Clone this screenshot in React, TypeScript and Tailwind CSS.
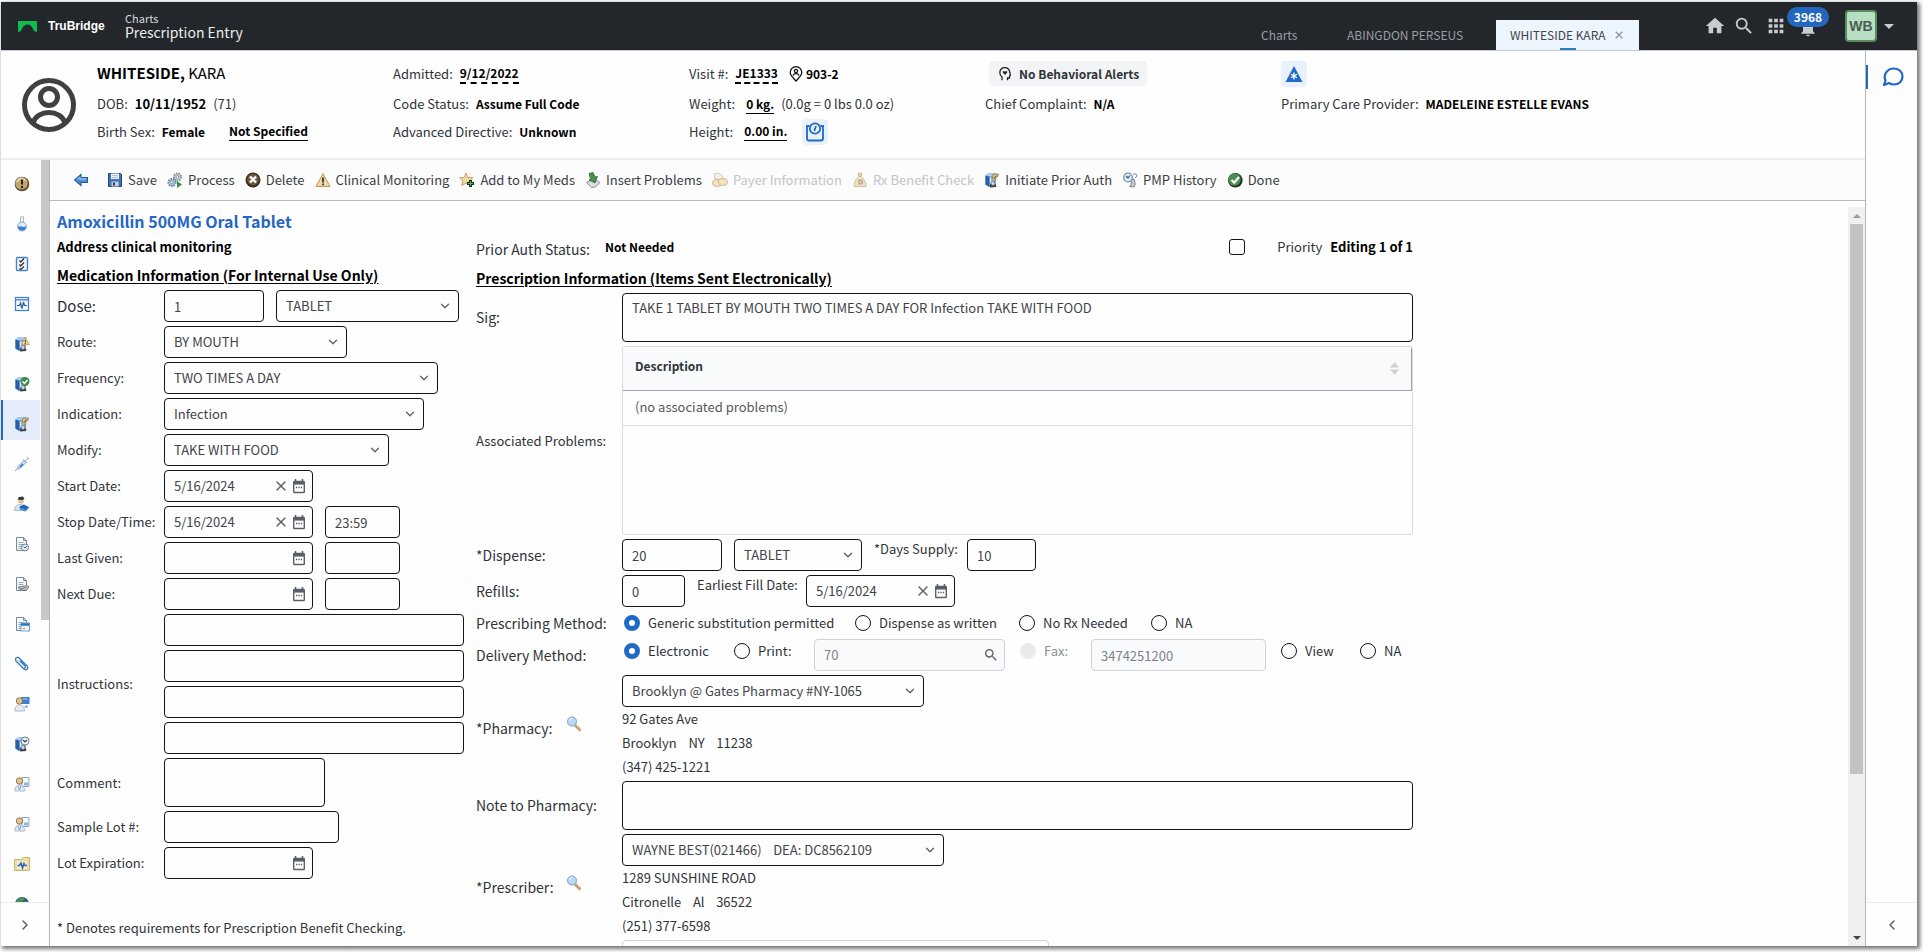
import type { ReactNode } from "react";
import { ChevronDown, ChevronLeft, ChevronRight, X } from "lucide-react";
import { MdHome, MdSearch, MdApps, MdNotifications, MdArrowDropDown } from "react-icons/md";

const inputStyle = "h-8 rounded-[4px] border border-[#111418] bg-transparent px-[9px] text-[13px] text-[#3f4449]";
const areaStyle = "block h-[49px] resize-none rounded-[4px] border border-[#111418] bg-transparent px-[9px] py-1 text-[13px] leading-5 text-[#3f4449]";

/* ---------- small coloured icons ---------- */

function Svg({ children, className = "size-4" }: { children: ReactNode; className?: string }) {
  return (
    <svg viewBox="0 0 16 16" className={`${className} shrink-0`} fill="none" aria-hidden="true">
      {children}
    </svg>
  );
}

function ChartBase() {
  return (
    <>
      <path d="M1.500 3.500 4 1.500h8.500L11.500 13l-3 2-4.500-.5-2.500-2z" fill="#4f8bcf" />
      <path d="M1.500 3.500 5 4.500v10l-3.500-2z" fill="#2560a6" />
      <path d="M1.500 3.500 4 1.500h8.500l-2 2.500L5 4.500z" fill="#a9ccf0" />
      <path d="M5.800 5.500h4.700l-.5 6H6z" fill="#dfeaf6" />
      <path d="M7 7h2.500M7 9h2" stroke="#7d97b5" />
      <path d="M6 15.500c-.8-2.500.8-4 3-4s4 1.500 3 3.500z" fill="#3d4248" />
      <circle cx="9" cy="11.500" r="1.900" fill="#d8dee3" stroke="#5b636c" strokeWidth=".7" />
    </>
  );
}

function AlertIcon() {
  return (
    <Svg>
      <circle cx="8" cy="8" r="7.300" fill="#5d4c2b" />
      <circle cx="7.500" cy="7.300" r="6.200" fill="#c0a873" />
      <path d="M3 6a5 5 0 0 1 9-1" stroke="#eddfb8" strokeWidth="1.300" />
      <path d="M8 3.500v5" stroke="#2b2419" strokeWidth="2" />
      <circle cx="8" cy="11" r="1.200" fill="#2b2419" />
    </Svg>
  );
}

function FlaskIcon() {
  return (
    <Svg>
      <path d="M6 1h4" stroke="#a8b2bf" />
      <path d="M6.500 1.500v5M9.500 1.500v5" stroke="#a8b2bf" />
      <circle cx="8" cy="10.500" r="4.500" fill="#dcebfa" stroke="#92a8c2" />
      <path d="M4 10.500h8a4 4 0 0 1-8 0z" fill="#3a7fd0" />
      <circle cx="9.500" cy="9.500" r="1.200" fill="#fff" />
    </Svg>
  );
}

function ChecklistIcon() {
  return (
    <Svg>
      <rect x="2.500" y="1.500" width="11" height="13" rx="1" fill="#eef5fc" stroke="#4f83bf" strokeWidth="1.400" />
      <path d="m5.500 4.500 1.200 1.500L10 2.500M5.500 8.500 6.700 10 10 6.500M5.500 12.500l1.200 1 3.300-3" stroke="#2e3135" strokeWidth="1.300" />
    </Svg>
  );
}

function VitalsIcon() {
  return (
    <Svg>
      <rect x="1.500" y="1.500" width="13" height="13" fill="#f0f7fe" stroke="#3f80cc" strokeWidth="1.200" />
      <path d="M1.500 3.800h13" stroke="#3f80cc" strokeWidth="1.300" />
      <path d="M3 9.500h2.500L6.500 7 8 12.500 9.500 6l1 3.500H13" stroke="#2a5fa8" strokeWidth="1.200" />
    </Svg>
  );
}

function ChartWarningIcon() {
  return (
    <Svg>
      <ChartBase />
      <path d="m11 1.500 4.500 7h-8z" fill="#f5d592" stroke="#bf974a" strokeWidth=".8" />
      <path d="M11.300 4v2.300M11.300 7v1" stroke="#2b2419" />
    </Svg>
  );
}

function ChartCheckIcon() {
  return (
    <Svg>
      <ChartBase />
      <circle cx="11" cy="5.500" r="4.500" fill="#3f8a4c" />
      <path d="m8.500 5.500 2 2L13.500 4" stroke="#fff" strokeWidth="1.500" />
    </Svg>
  );
}

function ChartRxIcon() {
  return (
    <Svg>
      <ChartBase />
      <path d="M9 2h5.500l-.5 2.500-2 .5v2L9.500 9 8 7.500z" fill="#dcc08a" stroke="#8a7550" strokeWidth=".7" />
      <path d="m9.500 7 3-3.500" stroke="#574a36" />
    </Svg>
  );
}

function SyringeIcon() {
  return (
    <Svg>
      <path d="m1 15 3-3" stroke="#9aa2ab" />
      <path d="m4 10.500 6-6 2 2-6 6-2.500.5z" fill="#cfe2f6" stroke="#7fa3cd" />
      <path d="m5.500 10.500 3-3 1 1-3 3z" fill="#2e72c4" />
      <path d="m9 3 4 4M11.500 5l3-3M13 1l2 2" stroke="#9aa9bb" />
    </Svg>
  );
}

function ProviderBookIcon() {
  return (
    <Svg>
      <path d="M.5 14.500c0-4 2-6 5.500-6s6 2 6 6z" fill="#d9e3ee" stroke="#9aa9bb" strokeWidth=".7" />
      <circle cx="7" cy="5" r="2.800" fill="#e2bd8f" />
      <path d="M3.500 3.500 5 1l4-.5 1.500 2.500L8 4z" fill="#2f3237" />
      <path d="m5.500 10.500 4.500-2 5.500 3-4 4-5.500-2z" fill="#1f66b8" />
      <path d="m6.500 12.500 5 2 3.500-3" stroke="#8fbdf0" strokeWidth=".8" />
    </Svg>
  );
}

function PageBase() {
  return (
    <>
      <path d="M2.500 1.500h7l3 3v10h-10z" fill="#f7fafd" stroke="#7b8896" />
      <path d="M9.500 1.500v3h3" stroke="#7b8896" />
      <path d="M4.500 6.500h5M4.500 8.500h5M4.500 10.500h4M4.500 12.500h3" stroke="#94a7bc" />
    </>
  );
}

function PageClockIcon() {
  return (
    <Svg>
      <PageBase />
      <circle cx="11" cy="11.500" r="3.500" fill="#e8f0f8" stroke="#6c7c8e" />
      <path d="m9.500 10.500 1.500 1.500 2-2" stroke="#2e5c94" />
    </Svg>
  );
}

function PageNotesIcon() {
  return (
    <Svg>
      <PageBase />
      <path d="m4 11.500 8-2 3 1-2 3.500H6z" fill="#cfd3d6" stroke="#6f757b" strokeWidth=".8" />
      <path d="m6 13 7-2" stroke="#6f757b" />
    </Svg>
  );
}

function PageCalendarIcon() {
  return (
    <Svg>
      <PageBase />
      <rect x="7" y="7" width="8.500" height="8" fill="#f1f6fb" stroke="#6f9fd4" />
      <path d="M7 8.500h8.500" stroke="#2f74c6" strokeWidth="2.500" />
      <path d="M9 12.500h2" stroke="#d19b4b" strokeWidth="1.500" />
    </Svg>
  );
}

function ClipIcon() {
  return (
    <Svg>
      <path d="m3 6 7 7c2.500 2 5-.5 3-3L6 3C4-.5.500 2 2 5l7 7c1.500 1 3-.5 2-2L6 5" stroke="#3a78bf" strokeWidth="1.300" />
      <path d="m4 4 7 7" stroke="#a9cbef" />
    </Svg>
  );
}

function DoctorMonitorIcon() {
  return (
    <Svg>
      <rect x="7" y="1" width="8.500" height="7" fill="#3f7fc9" />
      <path d="M8.500 3h5" stroke="#b6d3f2" />
      <path d="M1 15c0-4 1.500-6 4.500-6s5 2 5 6z" fill="#e3ecf4" stroke="#8fa2b6" strokeWidth=".7" />
      <circle cx="5.500" cy="5" r="3.200" fill="#e5c48f" stroke="#7b6036" strokeWidth=".8" />
      <path d="m10 11 3-2 1 3z" fill="#6f9fd4" />
    </Svg>
  );
}

function ChartClockIcon() {
  return (
    <Svg>
      <ChartBase />
      <circle cx="11" cy="5" r="4" fill="#eef4fa" stroke="#708090" />
      <path d="M9 4l2 2 2-2" stroke="#2b4668" strokeWidth="1.200" />
    </Svg>
  );
}

function DoctorPageIcon() {
  return (
    <Svg>
      <path d="M8 1.500h7v9H8z" fill="#f4f8fc" stroke="#8fa9c5" />
      <path d="M10 6.500h4v3h-4z" fill="#8db3de" />
      <path d="M1 15c0-4 1.500-6 4.500-6s5 2 5 6z" fill="#e3ecf4" stroke="#8fa2b6" strokeWidth=".7" />
      <circle cx="5.500" cy="5" r="3.200" fill="#e5c48f" stroke="#7b6036" strokeWidth=".8" />
      <path d="m4 10 1.500 4L7 10" stroke="#6f9fd4" />
    </Svg>
  );
}

function FolderIcon() {
  return (
    <Svg>
      <path d="M.5 3.500h7l1.500-2h6.500v13H.5z" fill="#f0dba3" stroke="#c9b376" />
      <rect x="3" y="5" width="10" height="8" fill="#f5ecd0" />
      <path d="M3.500 9.500h2L7 7l1.500 5L10 7.500l1 2h2" stroke="#2a66b4" strokeWidth="1.500" />
    </Svg>
  );
}

function GlobeIcon() {
  return (
    <Svg>
      <circle cx="8" cy="8" r="7" fill="#2b5f8f" />
      <path d="M3 4c3-3 6-3 8-2L9 5l-3 1-1 3-3-2z" fill="#4f8f52" />
      <path d="m11 5 3 1v4l-3-2z" fill="#4f8f52" />
    </Svg>
  );
}

function BackIcon() {
  return (
    <Svg>
      <path d="M8 2.500v3h6.500v5H8v3L1.500 8z" fill="#4c8edb" stroke="#2459a0" strokeWidth="1.100" />
      <path d="M4 7.500 7 5v2h6" stroke="#b3d3f5" />
    </Svg>
  );
}

function SaveIcon() {
  return (
    <Svg>
      <path d="M1.500 1.500h12l1 1v12h-13z" fill="#3f74b8" stroke="#1f4479" />
      <path d="M4 1.500h8V7H4z" fill="#eef2f6" />
      <path d="M5 3.500h6M5 5.500h6" stroke="#9badc2" strokeWidth=".7" />
      <path d="M4.500 9.500h7v5h-7z" fill="#c7ccd2" />
      <path d="M6 10.500h2v3H6z" fill="#1f4479" />
    </Svg>
  );
}

function ProcessIcon() {
  return (
    <Svg>
      <circle cx="10.500" cy="5" r="3.600" fill="#c8d1da" stroke="#8793a0" strokeDasharray="1.500 1" strokeWidth="2" />
      <circle cx="10.500" cy="5" r="1.400" fill="#fff" stroke="#6d7884" strokeWidth=".7" />
      <circle cx="5" cy="10.500" r="3.600" fill="#b7cbe2" stroke="#6d84a3" strokeDasharray="1.500 1" strokeWidth="2" />
      <circle cx="5" cy="10.500" r="1.400" fill="#fff" stroke="#54709a" strokeWidth=".7" />
      <path d="m10 9 5 3.500-5 3.500z" fill="#3e8b45" />
    </Svg>
  );
}

function DeleteIcon() {
  return (
    <Svg>
      <circle cx="8" cy="8" r="7.500" fill="#3a2f20" />
      <circle cx="8" cy="7.500" r="5.800" fill="#6d5b3e" />
      <path d="m5 4.500 6 6M11 4.500l-6 6" stroke="#fff" strokeWidth="2.400" />
    </Svg>
  );
}

function WarningIcon() {
  return (
    <Svg>
      <path d="m8 1.500 7 13H1z" fill="#f2d9a4" stroke="#b99a5e" strokeLinejoin="round" />
      <path d="M8 5.500v5" stroke="#2a2a2a" strokeWidth="1.700" />
      <path d="M8 11.500v1.700" stroke="#2a2a2a" strokeWidth="1.700" />
    </Svg>
  );
}

function StarAddIcon() {
  return (
    <Svg>
      <path d="m7 1 1.800 4.500 5 .3-3.800 3 1.300 4.700L7 11l-4.300 2.500L4 8.800l-3.500-3 4.700-.3z" fill="#f1d9a3" stroke="#bc9a5b" strokeWidth=".9" />
      <path d="M11.500 8v7M8 11.500h7" stroke="#16301a" strokeWidth="3" />
      <path d="M11.500 9v5M9 11.500h5" stroke="#65b36b" />
    </Svg>
  );
}

function InsertIcon() {
  return (
    <Svg>
      <path d="m1.500 10.500 4-2h6l3.500 2-4.500 4.500-4 .500z" fill="#d9dee2" stroke="#7d868e" strokeWidth=".9" />
      <path d="m4 1.500 4-1 2 4.500 2.500-.5L10 11 4 8l1.500-1z" fill="#4f8f52" stroke="#326338" strokeWidth=".8" />
    </Svg>
  );
}

function CoinsIcon() {
  return (
    <Svg className="size-4 opacity-60">
      <path d="m2 2 5-1 4 4-2 3-6-1z" fill="#f3ead0" stroke="#a79a7c" strokeWidth=".8" />
      <ellipse cx="5" cy="11" rx="4.500" ry="3.500" fill="#ecd08c" stroke="#a18144" strokeWidth=".8" />
      <ellipse cx="11" cy="10" rx="4.500" ry="3.500" fill="#ecd08c" stroke="#a18144" strokeWidth=".8" />
      <path d="m3 10 3 2M9 9l3 2" stroke="#fff3cf" />
    </Svg>
  );
}

function MoneyBagIcon() {
  return (
    <Svg className="size-4 opacity-60">
      <path d="m6 1 4 .5L9.500 4h-3z" fill="#e0c384" stroke="#9d834d" strokeWidth=".8" />
      <path d="M6.500 4.500h3c2 2.500 5 6 4.500 10H2.500c-1-4 2-7.500 4-10z" fill="#ecd49b" stroke="#9d834d" strokeWidth=".8" />
      <circle cx="8.500" cy="10" r="2.700" fill="#8b7a56" />
      <path d="M7.500 10h2" stroke="#fff" />
    </Svg>
  );
}

function HistoryIcon() {
  return (
    <Svg>
      <path d="M7 8c3 1 3 4 .5 6.500l4.500.5c2-2 1-5 0-8z" fill="#bfc8d2" stroke="#68727d" strokeWidth=".8" />
      <circle cx="6" cy="5.500" r="4.300" fill="#e3effb" stroke="#7291b5" strokeWidth="1.300" />
      <path d="m4 4 2 2 2-2.500" stroke="#33557e" strokeWidth="1.200" />
      <path d="M11 2h3l1 2-2 2" stroke="#7291b5" />
    </Svg>
  );
}

function DoneIcon() {
  return (
    <Svg>
      <circle cx="8.300" cy="8.300" r="7.300" fill="#1c2f1f" />
      <circle cx="7.500" cy="7.500" r="6.300" fill="#4c8c50" />
      <path d="m4.500 8 2.700 2.700L12 5" stroke="#fff" strokeWidth="2.200" />
    </Svg>
  );
}

function LookupIcon() {
  return (
    <Svg>
      <path d="m9 9 5.500 5.500" stroke="#b98b54" strokeWidth="2.600" />
      <path d="m9.500 9 5 5" stroke="#efd3a8" />
      <circle cx="6" cy="5.500" r="4.500" fill="#b9d9f7" stroke="#7f9dbf" />
      <path d="M3.500 5a2.500 2.500 0 0 1 3-2.500" stroke="#fff" />
    </Svg>
  );
}

function CalendarIcon() {
  return (
    <svg viewBox="0 0 14 15" className="h-[15px] w-[14px]" fill="none" aria-hidden="true">
      <path d="M3.500 0v3M10.500 0v3" stroke="#5a5f65" strokeWidth="1.600" />
      <rect x="1.700" y="2.500" width="10.600" height="11" rx=".8" stroke="#5a5f65" strokeWidth="1.400" />
      <path d="M1.500 4h11" stroke="#5a5f65" strokeWidth="3.200" />
      <path d="M4 8.500h1.300M6.400 8.500h1.300M8.800 8.500h1.300" stroke="#5a5f65" strokeWidth="1.300" />
    </svg>
  );
}

/* ---------- form controls ---------- */

function Select({ id, value, width, label }: { id: string; value: string; width: string; label?: string }) {
  return (
    <div className={`relative ${width}`}>
      <select id={id} aria-label={label} className={`${inputStyle} w-full appearance-none pr-8`} defaultValue={value}>
        <option>{value}</option>
      </select>
      <ChevronDown className="pointer-events-none absolute top-[9px] right-[7px] size-[14px] text-[#5a5f65]" strokeWidth={2.2} />
    </div>
  );
}

function DateField({ id, value = "" }: { id: string; value?: string }) {
  return (
    <div className="flex h-8 w-[149px] items-center rounded-[4px] border border-[#111418] pr-1.5 pl-[9px]">
      <input id={id} className="w-0 flex-1 bg-transparent text-[13px] text-[#3f4449]" defaultValue={value} />
      {value && (
        <button aria-label="Clear date" className="mr-[3px]">
          <X className="size-4 text-[#5a5f65]" strokeWidth={2} />
        </button>
      )}
      <button aria-label="Open calendar">
        <CalendarIcon />
      </button>
    </div>
  );
}

function FormRow({ id, label, large, children }: { id: string; label: string; large?: boolean; children: ReactNode }) {
  return (
    <div className="flex items-center">
      <label htmlFor={id} className={`w-[107px] shrink-0 whitespace-nowrap ${large ? "text-[15px]" : ""}`}>
        {label}
      </label>
      <div className="flex gap-3">{children}</div>
    </div>
  );
}

function RxRow({ id, label, small, children, className = "mt-1 items-center" }: { id?: string; label: string; small?: boolean; children: ReactNode; className?: string }) {
  return (
    <div className={`flex ${className}`}>
      <label htmlFor={id} className={`w-[146px] shrink-0 whitespace-nowrap ${small ? "text-[13px]" : "text-[14px]"}`}>
        {label}
      </label>
      {children}
    </div>
  );
}

function Radio({ name, label, checked, disabled, width }: { name: string; label: string; checked?: boolean; disabled?: boolean; width: string }) {
  return (
    <label className={`flex shrink-0 items-center gap-2 whitespace-nowrap ${width} ${disabled ? "text-[#8a8f94]" : ""}`}>
      <input
        type="radio"
        name={name}
        defaultChecked={checked}
        disabled={disabled}
        className="size-4 shrink-0 appearance-none rounded-full border border-[#111418] bg-white checked:border-[5px] checked:border-[#2069c4] disabled:border-[#e9eaec] disabled:bg-[#e9eaec]"
      />
      {label}
    </label>
  );
}

/* ---------- page parts ---------- */

function TopBar() {
  return (
    <header className="flex h-12 shrink-0 bg-[#23272c] pr-4 pl-[17px] text-[#d5d7d9]">
      <div className="flex items-center">
        <svg viewBox="0 0 19 11" className="h-[11px] w-[19px]" aria-hidden="true">
          <path d="M0 0h19v11l-3-1C14 5 12 3.500 9.500 3.500S5 5 3 10l-3 1z" fill="#0fbb4c" />
        </svg>
        <span className="ml-[11px] w-[77px] font-['Liberation_Sans',sans-serif] text-[12px] font-bold text-white">TruBridge</span>
        <div>
          <div className="text-[11px] leading-[13px]">Charts</div>
          <div className="text-[14px] leading-[15px] text-[#eceded]">Prescription Entry</div>
        </div>
      </div>
      <nav className="ml-auto flex items-end text-[12px] leading-[30px] text-[#9b9ea1]">
        <a href="#charts" className="w-[86px]">Charts</a>
        <a href="#perseus" className="w-[149px]">ABINGDON PERSEUS</a>
        <div className="relative flex h-[30px] w-[143px] items-center justify-between bg-[#edf5fe] px-[14px] text-[#3f4449]">
          <a href="#kara">WHITESIDE KARA</a>
          <button aria-label="Close tab"><X className="size-3 text-[#8b9096]" strokeWidth={2.2} /></button>
          <span className="absolute bottom-0 left-16 h-0.5 w-4 bg-[#2e77c2]" />
        </div>
      </nav>
      <div className="ml-[65px] flex items-center text-[#c9cbcd]">
        <button aria-label="Home"><MdHome className="size-[22px]" /></button>
        <button aria-label="Search" className="ml-[7px]"><MdSearch className="size-[22px]" /></button>
        <button aria-label="Apps" className="ml-[10px]"><MdApps className="size-[22px]" /></button>
        <button aria-label="Notifications" className="relative ml-[11px]">
          <MdNotifications className="mt-1 size-5" />
          <span className="absolute -top-[7px] -left-[11px] h-5 w-[42px] rounded-full bg-[#2267bd] text-[12px] leading-5 font-bold text-white">3968</span>
        </button>
        <button className="ml-[27px] flex items-center">
          <span className="flex size-8 items-center justify-center rounded-[4px] border-2 border-[#5d8b5f] bg-[#b7dfc3] font-['Liberation_Sans',sans-serif] text-[14px] font-bold text-[#4d5a50]">WB</span>
          <MdArrowDropDown className="size-6" />
        </button>
      </div>
    </header>
  );
}

function Fact({ label, children }: { label: string; children: ReactNode }) {
  return (
    <div className="flex h-full items-center gap-[7px] whitespace-nowrap">
      <span>{label}</span>
      {children}
    </div>
  );
}

function PatientBanner() {
  return (
    <section className="flex h-[109px] shrink-0 items-center border-b-2 border-[#ededee] pl-[21px] text-[13px] text-[#2f3439]">
      <svg viewBox="0 0 54 54" className="size-[54px] shrink-0" fill="none" stroke="#404040" strokeWidth="5" aria-hidden="true">
        <circle cx="27" cy="27" r="24.500" />
        <circle cx="27" cy="19" r="8.500" />
        <path d="M11 45c4-14 28-14 32 0" />
      </svg>
      <div className="ml-[21px] flex h-[92px] leading-5 [&_b]:text-black">
        <div className="grid w-[296px] grid-rows-[30px_31px_24px]">
          <div className="text-[15px] leading-[28px] text-black"><b>WHITESIDE,</b> KARA</div>
          <Fact label="DOB:"><b>10/11/1952</b> <span>(71)</span></Fact>
          <Fact label="Birth Sex:"><b className="text-[12px]">Female</b> <b className="ml-[17px] border-b border-black text-[12px] leading-[18px]">Not Specified</b></Fact>
        </div>
        <div className="grid w-[296px] grid-rows-[30px_31px_24px] [&_b]:text-[12px]">
          <Fact label="Admitted:"><b className="border-b-2 border-dashed border-black leading-[18px]">9/12/2022</b></Fact>
          <Fact label="Code Status:"><b>Assume Full Code</b></Fact>
          <Fact label="Advanced Directive:"><b>Unknown</b></Fact>
        </div>
        <div className="grid w-[296px] grid-rows-[30px_31px_24px] [&_b]:text-[12px]">
          <Fact label="Visit #:">
            <b className="border-b-2 border-dashed border-black leading-[18px]">JE1333</b>
            <svg viewBox="0 0 14 16" className="ml-1 h-4 w-[14px]" fill="none" stroke="#111" strokeWidth="1.300" aria-hidden="true">
              <path d="M7 15C3 11 1.200 9 1.200 6.500a5.800 5.800 0 0 1 11.600 0C12.800 9 11 11 7 15z" />
              <circle cx="7" cy="5" r="1.600" />
              <path d="M4 9.500c1-2.500 5-2.500 6 0" />
            </svg>
            <b className="-ml-1">903-2</b>
          </Fact>
          <Fact label="Weight:"><b className="ml-1 border-b border-black leading-[18px]">0 kg.</b> <span>(0.0g = 0 lbs 0.0 oz)</span></Fact>
          <Fact label="Height:">
            <b className="ml-1 border-b border-black leading-[18px]">0.00 in.</b>
            <button aria-label="Measurements" className="ml-2 rounded-[4px] bg-[#e9f2fc] p-[3px]">
              <svg viewBox="0 0 20 20" className="size-5" fill="none" stroke="#2069c4" strokeWidth="1.800" aria-hidden="true">
                <path d="M4.500 4H2v12.500c0 1 .8 2 2 2h12c1.200 0 2-1 2-2V4h-2.500" />
                <circle cx="10" cy="6.500" r="5.200" />
                <path d="m9.300 9 1.700-5" />
              </svg>
            </button>
          </Fact>
        </div>
        <div className="grid w-[296px] grid-rows-[30px_31px_24px] [&_b]:text-[12px]">
          <div className="flex items-center">
            <button className="ml-1 flex h-[25px] items-center gap-2 rounded-[4px] bg-[#f3f4f5] px-2 pl-[10px] text-[12px] font-bold text-[#2f3439]">
              <svg viewBox="0 0 12 14" className="h-[14px] w-3" fill="none" stroke="#23272c" strokeWidth="1.300" aria-hidden="true">
                <path d="M3 13.300V10C1 8.500.8 7 .8 5.500a5 5 0 0 1 10 0l.7 3-1 .5v2h-2v2.300" />
                <path d="M6 8 3.800 5.500C3.500 4 5.500 3.500 6 5c.5-1.500 2.500-1 2.200.5z" fill="#23272c" stroke="none" />
              </svg>
              No Behavioral Alerts
            </button>
          </div>
          <Fact label="Chief Complaint:"><b>N/A</b></Fact>
        </div>
        <div className="grid grid-rows-[30px_31px_24px] [&_b]:text-[12px]">
          <div className="flex items-center">
            <button aria-label="Care alert" className="rounded-[4px] bg-[#e9f2fc] p-1">
              <svg viewBox="0 0 18 18" className="size-[18px]" aria-hidden="true">
                <path d="M9 1 17.500 17H.5z" fill="#2069c4" />
                <path d="M9 7.500v7M6 9.300l6 3.500M12 9.300l-6 3.500" stroke="#fff" strokeWidth="1.300" />
              </svg>
            </button>
          </div>
          <Fact label="Primary Care Provider:"><b>MADELEINE ESTELLE EVANS</b></Fact>
        </div>
      </div>
    </section>
  );
}

const sideItems = [
  { label: "Alerts", icon: <AlertIcon /> },
  { label: "Lab", icon: <FlaskIcon /> },
  { label: "Problem List", icon: <ChecklistIcon /> },
  { label: "Vitals", icon: <VitalsIcon /> },
  { label: "Allergies", icon: <ChartWarningIcon /> },
  { label: "Medication Reconciliation", icon: <ChartCheckIcon /> },
  { label: "Prescription Entry", icon: <ChartRxIcon />, active: true },
  { label: "Immunizations", icon: <SyringeIcon /> },
  { label: "Patient Education", icon: <ProviderBookIcon /> },
  { label: "Order Chronology", icon: <PageClockIcon /> },
  { label: "Notes", icon: <PageNotesIcon /> },
  { label: "Documentation", icon: <PageCalendarIcon /> },
  { label: "Attachments", icon: <ClipIcon /> },
  { label: "Physician Orders", icon: <DoctorMonitorIcon /> },
  { label: "Medication History", icon: <ChartClockIcon /> },
  { label: "Physician Documents", icon: <DoctorPageIcon /> },
  { label: "Physician Reports", icon: <DoctorPageIcon /> },
  { label: "Health History", icon: <FolderIcon /> },
  { label: "Web", icon: <GlobeIcon /> },
];

function SideBar() {
  return (
    <aside className="flex w-[49px] shrink-0 flex-col border-r border-[#b5b5b5]">
      <div className="flex min-h-0 flex-1">
        <nav className="min-h-0 w-[39px] overflow-hidden">
          {sideItems.map((item) => (
            <button
              key={item.label}
              aria-label={item.label}
              className={`flex h-10 w-full items-end justify-center border-l-2 pb-2 ${item.active ? "border-[#2069c4] bg-[#e5edfa]" : "border-transparent"}`}
            >
              {item.icon}
            </button>
          ))}
        </nav>
        <div className="ml-px h-[62%] flex-1 bg-[#c8c8c8]" />
      </div>
      <button aria-label="Expand menu" className="flex h-11 shrink-0 items-center justify-center border-t border-[#ececec]">
        <ChevronRight className="size-4 text-[#5a5f65]" strokeWidth={2.2} />
      </button>
    </aside>
  );
}

const actions = [
  { label: "Save", icon: <SaveIcon /> },
  { label: "Process", icon: <ProcessIcon /> },
  { label: "Delete", icon: <DeleteIcon /> },
  { label: "Clinical Monitoring", icon: <WarningIcon /> },
  { label: "Add to My Meds", icon: <StarAddIcon /> },
  { label: "Insert Problems", icon: <InsertIcon /> },
  { label: "Payer Information", icon: <CoinsIcon />, disabled: true },
  { label: "Rx Benefit Check", icon: <MoneyBagIcon />, disabled: true },
  { label: "Initiate Prior Auth", icon: <ChartRxIcon /> },
  { label: "PMP History", icon: <HistoryIcon /> },
  { label: "Done", icon: <DoneIcon /> },
];

function Toolbar() {
  return (
    <div className="flex h-[41px] shrink-0 items-center gap-[10px] border-b border-[#b9bbbd] bg-[#fcfcfc] pl-[23px]">
      <button aria-label="Back" className="mr-2">
        <BackIcon />
      </button>
      {actions.map((action) => (
        <button
          key={action.label}
          disabled={action.disabled}
          className="flex items-center gap-[5px] text-[13px] whitespace-nowrap text-[#3a3f44] disabled:text-[#c3c5c7]"
        >
          {action.icon}
          {action.label}
        </button>
      ))}
    </div>
  );
}

function MedicationInfo() {
  return (
    <section className="flex w-[419px] shrink-0 flex-col gap-[3px] pt-2">
      <h1 className="h-6 text-[16px] leading-6 font-bold text-[#2567c4]">Amoxicillin 500MG Oral Tablet</h1>
      <p className="h-6 text-[13px] leading-[22px] font-bold text-black">Address clinical monitoring</p>
      <h2 className="h-6 text-[14px] leading-6 font-bold text-black underline underline-offset-2">Medication Information (For Internal Use Only)</h2>
      <div className="flex flex-col gap-1">
        <FormRow id="dose" label="Dose:" large>
          <input id="dose" className={`${inputStyle} w-[100px]`} defaultValue="1" />
          <Select id="doseUnit" label="Dose unit" value="TABLET" width="w-[183px]" />
        </FormRow>
        <FormRow id="route" label="Route:">
          <Select id="route" value="BY MOUTH" width="w-[183px]" />
        </FormRow>
        <FormRow id="frequency" label="Frequency:">
          <Select id="frequency" value="TWO TIMES A DAY" width="w-[274px]" />
        </FormRow>
        <FormRow id="indication" label="Indication:">
          <Select id="indication" value="Infection" width="w-[260px]" />
        </FormRow>
        <FormRow id="modify" label="Modify:">
          <Select id="modify" value="TAKE WITH FOOD" width="w-[225px]" />
        </FormRow>
        <FormRow id="startDate" label="Start Date:">
          <DateField id="startDate" value="5/16/2024" />
        </FormRow>
        <FormRow id="stopDate" label="Stop Date/Time:">
          <DateField id="stopDate" value="5/16/2024" />
          <input aria-label="Stop time" className={`${inputStyle} w-[75px]`} defaultValue="23:59" />
        </FormRow>
        <FormRow id="lastGiven" label="Last Given:">
          <DateField id="lastGiven" />
          <input aria-label="Last given time" className={`${inputStyle} w-[75px]`} />
        </FormRow>
        <FormRow id="nextDue" label="Next Due:">
          <DateField id="nextDue" />
          <input aria-label="Next due time" className={`${inputStyle} w-[75px]`} />
        </FormRow>
        <FormRow id="instructions1" label="Instructions:">
          <div className="flex flex-col gap-1">
            {[1, 2, 3, 4].map((line) => (
              <input key={line} id={`instructions${line}`} aria-label={`Instructions line ${line}`} className={`${inputStyle} w-[300px]`} />
            ))}
          </div>
        </FormRow>
        <FormRow id="comment" label="Comment:">
          <textarea id="comment" className={`${areaStyle} w-[161px]`} />
        </FormRow>
        <FormRow id="sampleLot" label="Sample Lot #:">
          <input id="sampleLot" className={`${inputStyle} w-[175px]`} />
        </FormRow>
        <FormRow id="lotExpiration" label="Lot Expiration:">
          <DateField id="lotExpiration" />
        </FormRow>
      </div>
      <p className="mt-[34px] leading-6">* Denotes requirements for Prescription Benefit Checking.</p>
    </section>
  );
}

function ProblemTable() {
  return (
    <div className="h-[189px] flex-1 overflow-hidden rounded-[3px] border border-[#d9dbdd]">
      <table className="w-full text-left">
        <thead>
          <tr className="h-[43px] border-r border-b border-[#9fa2a5] bg-[#f9fafc]">
            <th className="pb-1 pl-3 text-[12px] font-bold text-[#2f3439]">Description</th>
            <th className="w-8 pl-[10px]">
              <svg viewBox="0 0 9 13" className="h-[13px] w-[9px]" fill="#cfd1d3" aria-hidden="true">
                <path d="M4.500 0 9 5.500H0zM4.500 13 9 7.500H0z" />
              </svg>
            </th>
          </tr>
        </thead>
        <tbody>
          <tr className="h-[35px] border-b border-[#d9dbdd] text-[#54595e]">
            <td colSpan={2} className="pb-0.5 pl-3">(no associated problems)</td>
          </tr>
        </tbody>
      </table>
    </div>
  );
}

function Address({ lines }: { lines: string[] }) {
  return (
    <div className="pb-0.5 leading-6 whitespace-pre">
      {lines.map((line) => (
        <div key={line}>{line}</div>
      ))}
    </div>
  );
}

function LookupRow({ id, label, children }: { id: string; label: string; children: ReactNode }) {
  return (
    <div className="mt-1 flex items-center">
      <div className="flex w-[146px] shrink-0 items-center text-[14px]">
        <label htmlFor={id} className="w-[90px]">{label}</label>
        <button aria-label={`Look up ${id}`} className="mb-2">
          <LookupIcon />
        </button>
      </div>
      <div>{children}</div>
    </div>
  );
}

function PrescriptionInfo() {
  return (
    <section className="w-[937px] shrink-0 pt-[34px]">
      <div className="flex h-7 items-center">
        <span className="w-[129px] text-[14px]">Prior Auth Status:</span>
        <b className="mb-1 text-[12px] text-black">Not Needed</b>
        <label className="mb-1 ml-auto flex items-center gap-8">
          <input type="checkbox" className="size-4 appearance-none rounded-[3px] border border-[#111418]" />
          Priority
        </label>
        <b className="mb-1 ml-2 text-black">Editing 1 of 1</b>
      </div>
      <h2 className="my-[3px] h-6 text-[14px] leading-6 font-bold text-black underline underline-offset-2">Prescription Information (Items Sent Electronically)</h2>
      <RxRow id="sig" label="Sig:" className="items-center">
        <textarea id="sig" className={`${areaStyle} flex-1`} defaultValue="TAKE 1 TABLET BY MOUTH TWO TIMES A DAY FOR Infection TAKE WITH FOOD" />
      </RxRow>
      <RxRow label="Associated Problems:" small>
        <ProblemTable />
      </RxRow>
      <RxRow id="dispense" label="*Dispense:">
        <input id="dispense" className={`${inputStyle} w-[100px]`} defaultValue="20" />
        <div className="ml-3">
          <Select id="dispenseUnit" label="Dispense unit" value="TABLET" width="w-[128px]" />
        </div>
        <label htmlFor="daysSupply" className="mb-3 ml-3 w-[93px]">*Days Supply:</label>
        <input id="daysSupply" className={`${inputStyle} w-[69px]`} defaultValue="10" />
      </RxRow>
      <RxRow id="refills" label="Refills:">
        <input id="refills" className={`${inputStyle} w-[63px]`} defaultValue="0" />
        <label htmlFor="fillDate" className="mb-3 ml-3 w-[109px]">Earliest Fill Date:</label>
        <DateField id="fillDate" value="5/16/2024" />
      </RxRow>
      <RxRow label="Prescribing Method:" className="mt-1 h-6 items-center">
        <div className="flex pl-0.5">
          <Radio name="prescribing" label="Generic substitution permitted" width="w-[231px]" checked />
          <Radio name="prescribing" label="Dispense as written" width="w-[164px]" />
          <Radio name="prescribing" label="No Rx Needed" width="w-[132px]" />
          <Radio name="prescribing" label="NA" width="w-[48px]" />
        </div>
      </RxRow>
      <RxRow label="Delivery Method:" className="mt-1 h-8 items-center">
        <div className="flex h-8 pl-0.5">
          <div className="mb-2 flex">
            <Radio name="delivery" label="Electronic" width="w-[110px]" checked />
            <Radio name="delivery" label="Print:" width="w-[80px]" />
          </div>
          <div className="flex h-8 w-[191px] items-center rounded-[4px] border border-[#cfd2d6] bg-[#f9fafc] px-[9px] pr-[5px] text-[#7d8287]">
            <input aria-label="Printer" disabled className="w-0 flex-1 bg-transparent" defaultValue="70" />
            <MdSearch className="size-4 text-[#5a5f65]" />
          </div>
          <div className="mb-2 ml-[15px] flex">
            <Radio name="delivery" label="Fax:" width="w-[71px]" disabled />
          </div>
          <input aria-label="Fax number" disabled className="h-8 w-[175px] rounded-[4px] border border-[#cfd2d6] bg-[#f9fafc] px-[9px] text-[#7d8287]" defaultValue="3474251200" />
          <div className="mb-2 ml-[15px] flex">
            <Radio name="delivery" label="View" width="w-[79px]" />
            <Radio name="delivery" label="NA" width="w-[48px]" />
          </div>
        </div>
      </RxRow>
      <LookupRow id="pharmacy" label="*Pharmacy:">
        <Select id="pharmacy" value="Brooklyn @ Gates Pharmacy #NY-1065" width="w-[302px]" />
        <Address lines={["92 Gates Ave", "Brooklyn    NY    11238", "(347) 425-1221"]} />
      </LookupRow>
      <RxRow id="note" label="Note to Pharmacy:" className="items-center">
        <textarea id="note" className={`${areaStyle} flex-1`} />
      </RxRow>
      <LookupRow id="prescriber" label="*Prescriber:">
        <Select id="prescriber" value={"WAYNE BEST(021466)\u00a0\u00a0\u00a0\u00a0DEA: DC8562109"} width="w-[322px]" />
        <Address lines={["1289 SUNSHINE ROAD", "Citronelle    Al    36522", "(251) 377-6598"]} />
      </LookupRow>
      <div className="ml-[146px] h-8 w-[427px] rounded-[4px] border border-[#cfd2d6]" />
    </section>
  );
}

function ScrollTrack() {
  return (
    <div className="mt-1.5 flex w-[17px] shrink-0 flex-col items-center bg-[#f0f0f0]">
      <button aria-label="Scroll up" className="flex h-[17px] shrink-0 items-center">
        <svg viewBox="0 0 8 4" className="h-1 w-2" fill="#9a9a9a"><path d="m0 4 4-4 4 4z" /></svg>
      </button>
      <div className="min-h-0 w-[13px] flex-1">
        <div className="h-[78%] bg-[#c1c2c1]" />
      </div>
      <button aria-label="Scroll down" className="flex h-[17px] shrink-0 items-center">
        <svg viewBox="0 0 8 4" className="h-1 w-2" fill="#444"><path d="m0 0 4 4 4-4z" /></svg>
      </button>
    </div>
  );
}

function RightRail() {
  return (
    <aside className="flex w-[52px] shrink-0 flex-col border-l border-[#b5b5b5]">
      <button aria-label="Messages" className="mt-[14px] flex h-6 items-center border-l-2 border-[#2069c4] pl-[14px]">
        <svg viewBox="0 0 22 20" className="h-5 w-[22px]" fill="none" stroke="#2069c4" strokeWidth="2.200" strokeLinejoin="round" aria-hidden="true">
          <path d="M12 1.500c5 0 8.500 3.500 8.500 8s-3.500 8-8.500 8c-2 0-3.500-.5-5-1.500L2 18l1.500-4.500C1 8 5 1.500 12 1.500z" />
        </svg>
      </button>
      <button aria-label="Collapse panel" className="mt-auto flex h-11 items-center justify-center border-t border-[#ececec]">
        <ChevronLeft className="size-4 text-[#5a5f65]" strokeWidth={2.2} />
      </button>
    </aside>
  );
}

export default function App() {
  return (
    <div className="h-screen overflow-hidden bg-white pt-0.5 pr-[7px] pb-1.5 pl-px font-['Noto_Sans_CJK_SC',sans-serif]">
      <div className="flex h-full flex-col bg-[#fefefe] shadow-[2px_2px_4px_1px_#777]">
        <TopBar />
        <div className="flex min-h-0 flex-1 border-t border-[#c9cacb]">
          <div className="flex min-w-0 flex-1 flex-col">
            <PatientBanner />
            <div className="flex min-h-0 flex-1">
              <SideBar />
              <main className="flex min-w-0 flex-1 flex-col">
                <Toolbar />
                <div className="flex min-h-0 flex-1">
                  <div className="flex min-w-0 flex-1 overflow-hidden pl-[7px] text-[13px] text-[#2f3439]">
                    <MedicationInfo />
                    <PrescriptionInfo />
                  </div>
                  <ScrollTrack />
                </div>
              </main>
            </div>
          </div>
          <RightRail />
        </div>
      </div>
    </div>
  );
}
